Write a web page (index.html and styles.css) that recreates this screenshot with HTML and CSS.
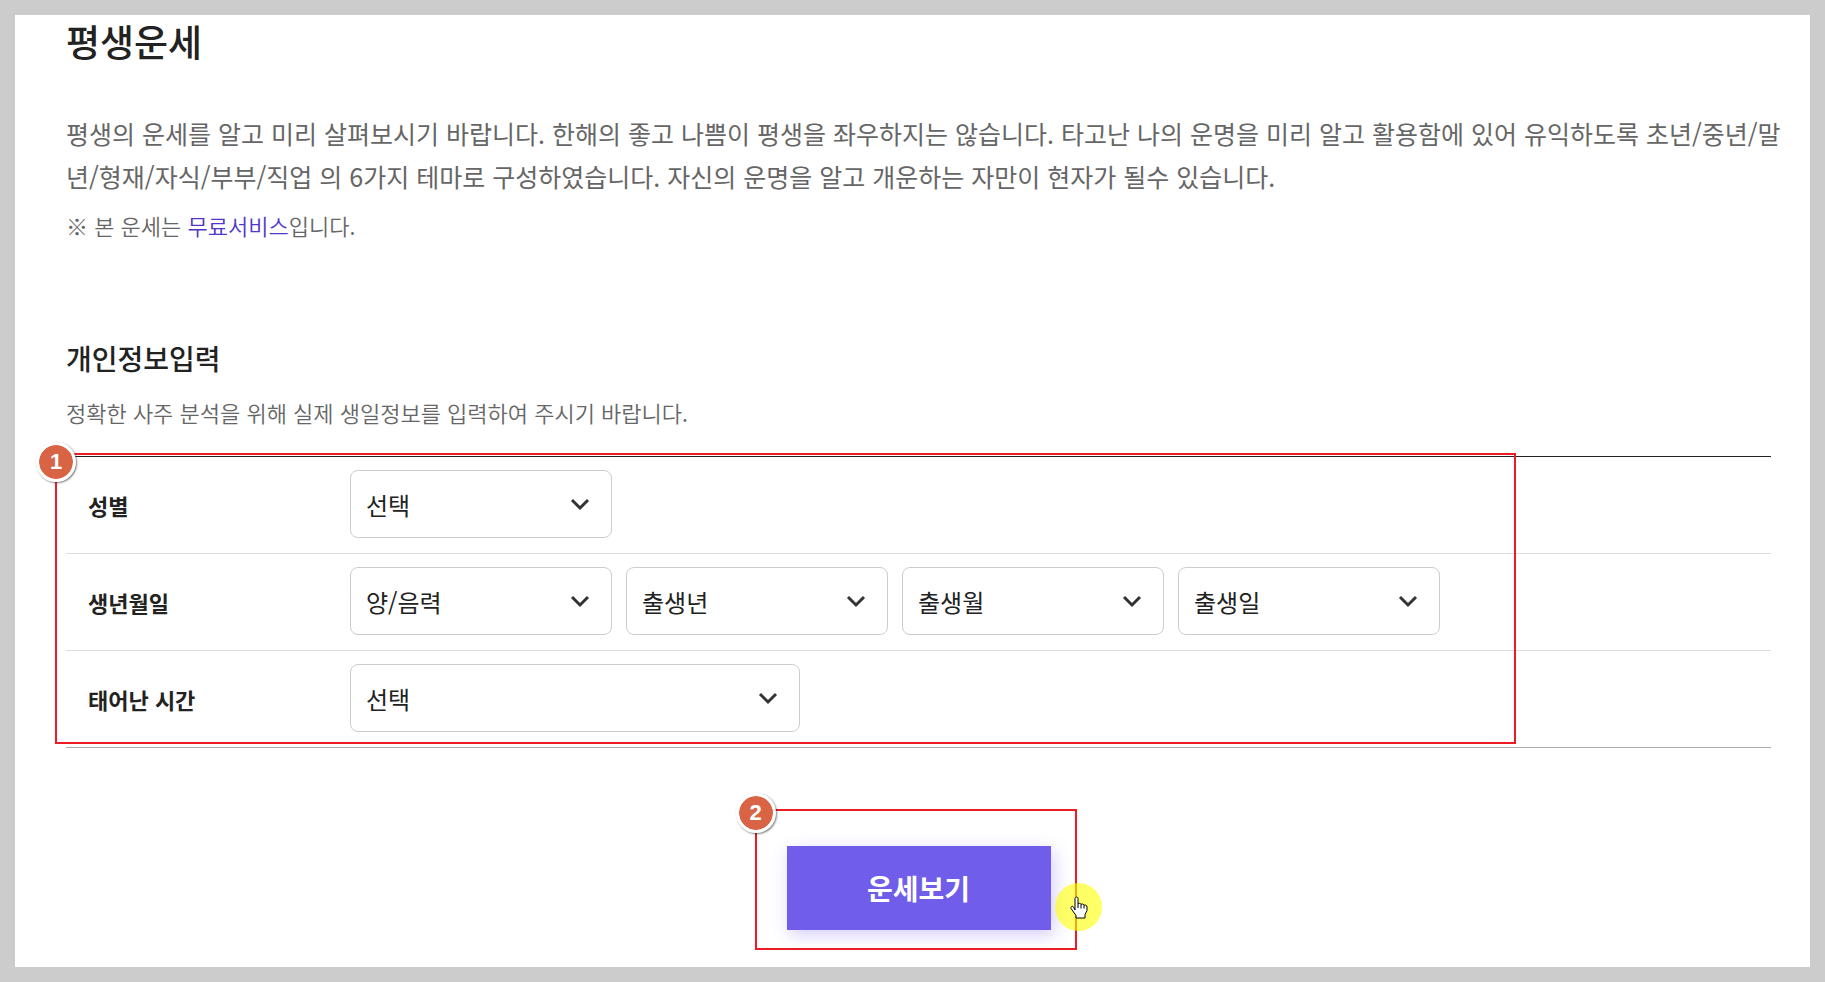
FILE: index.html
```html
<!DOCTYPE html>
<html lang="ko">
<head>
    <meta charset="UTF-8">
    <meta name="viewport" content="width=device-width, initial-scale=1.0">
    <title>평생운세</title>
    <link rel="stylesheet" href="styles.css">
</head>
<body>
    <main class="page">
        <h1 class="title">평생운세</h1>
        <p class="intro">평생의 운세를 알고 미리 살펴보시기 바랍니다. 한해의 좋고 나쁨이 평생을 좌우하지는 않습니다. 타고난 나의 운명을 미리 알고 활용함에 있어 유익하도록 초년/중년/말년/형재/자식/부부/직업 의 6가지 테마로 구성하였습니다. 자신의 운명을 알고 개운하는 자만이 현자가 될수 있습니다.</p>
        <p class="note">※ 본 운세는 <span class="point">무료서비스</span>입니다.</p>

        <h2 class="subtitle">개인정보입력</h2>
        <p class="guide">정확한 사주 분석을 위해 실제 생일정보를 입력하여 주시기 바랍니다.</p>

        <form>
            <div class="step">
                <table class="info">
                    <tr>
                        <th scope="row"><label for="gender">성별</label></th>
                        <td>
                            <div class="fields">
                                <div class="select">
                                    <select id="gender"><option>선택</option><option>남자</option><option>여자</option></select>
                                    <svg class="arrow" viewBox="0 0 20 14"><path d="M2 2l8 8 8-8"/></svg>
                                </div>
                            </div>
                        </td>
                    </tr>
                    <tr>
                        <th scope="row"><label for="calendar">생년월일</label></th>
                        <td>
                            <div class="fields">
                                <div class="select">
                                    <select id="calendar"><option>양/음력</option></select>
                                    <svg class="arrow" viewBox="0 0 20 14"><path d="M2 2l8 8 8-8"/></svg>
                                </div>
                                <div class="select">
                                    <select aria-label="출생년"><option>출생년</option></select>
                                    <svg class="arrow" viewBox="0 0 20 14"><path d="M2 2l8 8 8-8"/></svg>
                                </div>
                                <div class="select">
                                    <select aria-label="출생월"><option>출생월</option></select>
                                    <svg class="arrow" viewBox="0 0 20 14"><path d="M2 2l8 8 8-8"/></svg>
                                </div>
                                <div class="select">
                                    <select aria-label="출생일"><option>출생일</option></select>
                                    <svg class="arrow" viewBox="0 0 20 14"><path d="M2 2l8 8 8-8"/></svg>
                                </div>
                            </div>
                        </td>
                    </tr>
                    <tr>
                        <th scope="row"><label for="time">태어난 시간</label></th>
                        <td>
                            <div class="fields">
                                <div class="select wide">
                                    <select id="time"><option>선택</option></select>
                                    <svg class="arrow" viewBox="0 0 20 14"><path d="M2 2l8 8 8-8"/></svg>
                                </div>
                            </div>
                        </td>
                    </tr>
                </table>
                <div class="mark mark-form"><span class="num">1</span></div>
            </div>

            <div class="submit">
                <div class="step">
                    <button type="button" class="btn">운세보기</button>
                    <div class="mark mark-btn"><span class="num">2</span></div>
                    <div class="pointer">
                        <svg class="hand" viewBox="0 0 18 23">
                            <path d="M5 14V2.500C5 .5 8 .5 8 2.500V8C8.500 7 11 7 11 8.500C12 7.500 14 8 14 9.500C15 8.500 17 9 17 11V14.500L15 18.500V22H6V19.500L1 12.500C.5 10.500 2.500 9.500 3.500 11Z"/>
                            <path d="M8 8v4M11 8.500v4M14 9.500v3"/>
                        </svg>
                    </div>
                </div>
            </div>
        </form>
    </main>
</body>
</html>
```
FILE: styles.css
```css
* {
    box-sizing: border-box;
}

body {
    margin: 0;
    padding: 15px;
    background-color: #ccc;
    color: #222;
    font-family: "Noto Sans CJK KR", sans-serif;
}

.page {
    padding: 0 39px 37px 51px;
    background-color: #fff;
}

.title {
    margin: 0;
    font-size: 37px;
    line-height: 52px;
    font-weight: 500;
}

.intro {
    margin: 45px -20px 0 0;
    font-size: 25px;
    line-height: 43px;
    color: #666;
}

.note,
.guide {
    margin: 7px 0 0;
    font-size: 22px;
    line-height: 40px;
    font-weight: 350;
    color: #666;
}

.point {
    color: #5037c8;
}

.subtitle {
    margin: 91px 0 0;
    font-size: 28px;
    line-height: 44px;
    font-weight: 500;
}

.guide {
    margin: 12px 0 24px;
}

/* form */
.step {
    position: relative;
}

.info {
    width: 100%;
    border-collapse: separate;
    border-spacing: 0;
    border-top: 1px solid #222;
    border-bottom: 1px solid #aaa;
}

.info tr + tr th,
.info tr + tr td {
    border-top: 1px solid #ddd;
}

.info th {
    width: 284px;
    padding: 0 0 0 22px;
    text-align: left;
    font-size: 22px;
    font-weight: 700;
}

.info td {
    padding: 13px 0 15px;
}

.fields {
    display: flex;
    gap: 14px;
}

.select {
    position: relative;
    width: 262px;
}

.select.wide {
    width: 450px;
}

.select select {
    display: block;
    width: 100%;
    height: 68px;
    padding: 0 48px 0 15px;
    border: 1px solid #ccc;
    border-radius: 8px;
    background-color: #fff;
    color: #222;
    font-family: inherit;
    font-size: 24px;
    appearance: none;
}

.arrow {
    position: absolute;
    top: 28px;
    right: 22px;
    width: 20px;
    height: 14px;
    fill: none;
    stroke: #333;
    stroke-width: 3;
    pointer-events: none;
}

/* button */
.submit {
    display: flex;
    justify-content: center;
    margin-top: 98px;
}

.btn {
    display: block;
    width: 264px;
    height: 84px;
    border: 0;
    background-color: #705dea;
    box-shadow: 3px 5px 16px rgba(112, 93, 234, 0.3);
    color: #fff;
    font-family: inherit;
    font-size: 28px;
    font-weight: 700;
    cursor: pointer;
}

/* step markers */
.mark {
    position: absolute;
    border: 2px solid #ed1c24;
    pointer-events: none;
}

.mark-form {
    top: -3px;
    right: 255px;
    bottom: 4px;
    left: -11px;
}

.mark-btn {
    top: -37px;
    right: -26px;
    bottom: -20px;
    left: -32px;
}

.num {
    position: absolute;
    top: -18px;
    left: -21px;
    width: 40px;
    height: 40px;
    border: 3px solid #fff;
    border-radius: 50%;
    background-color: #d96445;
    background-clip: padding-box;
    box-shadow: 1px 1px 2px rgba(0, 0, 0, 0.5);
    color: #fff;
    font-family: "Liberation Sans", Arial, sans-serif;
    font-size: 22px;
    line-height: 34px;
    font-weight: bold;
    text-align: center;
}

.mark-form .num {
    top: -13px;
}

.pointer {
    position: absolute;
    top: 37px;
    right: -51px;
    width: 47px;
    height: 48px;
    border-radius: 50%;
    background-color: rgba(255, 255, 0, 0.6);
}

.hand {
    position: absolute;
    top: 13px;
    left: 15px;
    width: 18px;
    height: 23px;
    fill: #fff;
    stroke: #000;
    stroke-width: 1;
}
```
